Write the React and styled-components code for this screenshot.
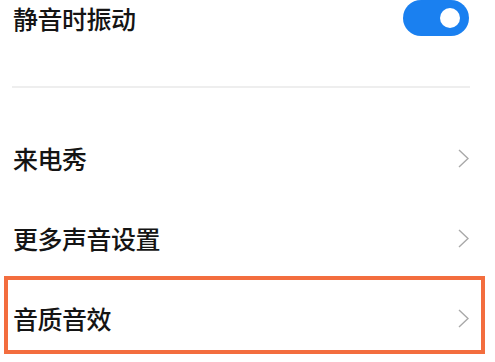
import { createGlobalStyle, styled } from 'styled-components'

const GlobalStyle = createGlobalStyle`
  html, body {
    margin: 0;
    padding: 0;
    background: #ffffff;
  }
  body {
    font-family: "Noto Sans CJK SC", "Noto Sans", sans-serif;
    color: #141414;
  }
`

const items = [
  { label: '来电秀' },
  { label: '更多声音设置' },
  { label: '音质音效', highlight: true },
]

const Chevron = () => (
  <svg width="11" height="19" viewBox="0 0 11 19" fill="none">
    <path d="M1 1 L10 9.5 L1 18" stroke="#a9a9a9" strokeWidth="1.4" />
  </svg>
)

export default function App() {
  return (
    <>
      <GlobalStyle />
      <Page>
        <ToggleRow>
          <Label>静音时振动</Label>
          <Switch>
            <Knob />
          </Switch>
        </ToggleRow>
        <Divider />
        <List>
          {items.map((item) => (
            <Row key={item.label} $highlight={item.highlight}>
              <Label>{item.label}</Label>
              <Chevron />
            </Row>
          ))}
        </List>
      </Page>
    </>
  )
}

const Page = styled.div`
  width: 495px;
  height: 362px;
  overflow: hidden;
  display: flex;
  flex-direction: column;
`

const ToggleRow = styled.div`
  height: 37px;
  display: flex;
  align-items: center;
  justify-content: space-between;
  padding: 0 26px 0 13px;
`

const Label = styled.span`
  font-size: 25px;
  font-weight: 500;
  line-height: 1;
  letter-spacing: -0.5px;
`

const Switch = styled.div`
  width: 66px;
  height: 36px;
  border-radius: 18px;
  background: #1a80f0;
  display: flex;
  align-items: center;
  justify-content: flex-end;
  padding-right: 9px;
  box-sizing: border-box;
  margin-top: -1px;
`

const Knob = styled.div`
  width: 20px;
  height: 20px;
  border-radius: 50%;
  background: #ffffff;
`

const Divider = styled.div`
  height: 2px;
  margin: 49px 25px 0 12px;
  background: #eeeeee;
`

const List = styled.div`
  display: flex;
  flex-direction: column;
  margin-top: 30px;
`

const Row = styled.div`
  height: 80px;
  display: flex;
  align-items: center;
  justify-content: space-between;
  padding: 0 26px 0 13px;
  box-sizing: border-box;

  ${({ $highlight }) =>
    $highlight &&
    `
    height: 78px;
    margin: -2px 10px 0 4px;
    border: 4px solid #f36d3e;
    padding: 7px 12px 0 5px;
  `}
`
